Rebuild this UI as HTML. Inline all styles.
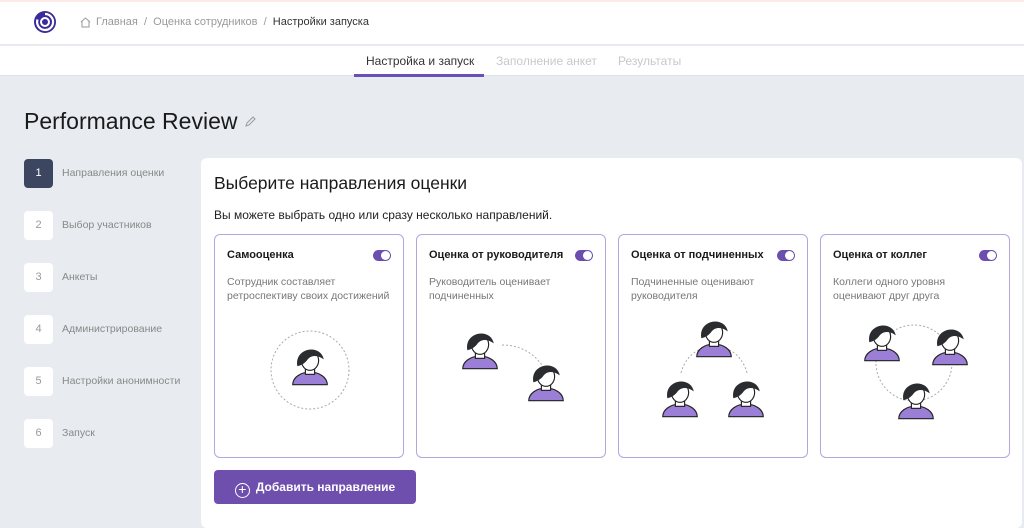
<!DOCTYPE html>
<html><head><meta charset="utf-8"><style>
*{box-sizing:border-box;margin:0;padding:0}
body{width:1024px;height:514px;overflow:hidden;background:#e8ecf0;font-family:"Liberation Sans",sans-serif;position:relative}
.abs{position:absolute}
.hdr{left:0;top:0;width:1024px;height:45px;background:#fff;border-top:2px solid #fde9e6;border-bottom:1px solid #e6e8eb}
.tabs{left:0;top:46px;width:1024px;height:30px;background:#fff;border-bottom:1px solid #dde1e6}
.step{left:24px;width:29px;height:29px;border-radius:4px;background:#fff;color:#999;font-size:11px;text-align:center;line-height:29px}
.sl{left:62px;font-size:10.5px;color:#888}
.main{left:201px;top:158px;width:821px;height:370px;background:#fff;border-radius:6px}
.card{top:234px;width:190px;height:224px;border:1px solid #b4a6dc;border-radius:6px;background:#fff}
.card h3{position:absolute;left:12px;top:14px;font-size:11px;font-weight:bold;color:#1a1a1a}
.card p{position:absolute;left:12px;top:40px;font-size:10.5px;line-height:14px;color:#777}
.tg{position:absolute;right:12px;top:15px;width:18px;height:11px;border-radius:6px;background:#6a4fae}
.tg::after{content:"";position:absolute;right:1px;top:1px;width:9px;height:9px;border-radius:50%;background:#fff}
.card svg{position:absolute;left:0;top:60px}
</style></head><body>
<div class="abs hdr"></div>
<svg class="abs" style="left:33px;top:10px" width="24" height="24" viewBox="0 0 24 24"><circle cx="12" cy="12" r="11" fill="#3b2a9a"/><path d="M12 4a8 8 0 1 1-7.5 5.5" stroke="#fff" stroke-width="2.2" fill="none"/><circle cx="12" cy="12" r="4" fill="none" stroke="#fff" stroke-width="2"/></svg>
<svg class="abs" style="left:80px;top:17px" width="11" height="11" viewBox="0 0 11 11"><path d="M1 5L5.5 1 10 5M2 4.5V10h7V4.5" stroke="#999" fill="none"/></svg>
<div class="abs" style="left:96px;top:16px;font-size:11px;color:#999">Главная &nbsp;/ &nbsp;Оценка сотрудников &nbsp;/ &nbsp;<span style="color:#333">Настройки запуска</span></div>
<div class="abs tabs"></div>
<div class="abs" style="left:366px;top:54px;font-size:12px;color:#333">Настройка и запуск</div>
<div class="abs" style="left:354px;top:74px;width:130px;height:3px;background:#6a4fb8"></div>
<div class="abs" style="left:496px;top:54px;font-size:12px;color:#c8c8c8">Заполнение анкет</div>
<div class="abs" style="left:618px;top:54px;font-size:12px;color:#c8c8c8">Результаты</div>
<div class="abs" style="left:24px;top:108px;font-size:23px;color:#1a1a1a">Performance Review</div>
<svg class="abs" style="left:244px;top:115px" width="13" height="13" viewBox="0 0 13 13"><path d="M2 11l1-3 6-6 2 2-6 6z" stroke="#999" fill="none"/></svg>
<div class="abs step" style="top:159px;background:#3d4660;color:#fff">1</div><div class="abs sl" style="top:167px">Направления оценки</div>
<div class="abs step" style="top:211px">2</div><div class="abs sl" style="top:219px">Выбор участников</div>
<div class="abs step" style="top:263px">3</div><div class="abs sl" style="top:271px">Анкеты</div>
<div class="abs step" style="top:315px">4</div><div class="abs sl" style="top:323px">Администрирование</div>
<div class="abs step" style="top:367px">5</div><div class="abs sl" style="top:375px">Настройки анонимности</div>
<div class="abs step" style="top:419px">6</div><div class="abs sl" style="top:427px">Запуск</div>
<div class="abs main"></div>
<div class="abs" style="left:214px;top:173px;font-size:17.5px;color:#1a1a1a">Выберите направления оценки</div>
<div class="abs" style="left:214px;top:208px;font-size:12px;color:#222">Вы можете выбрать одно или сразу несколько направлений.</div>
<svg width="0" height="0" style="position:absolute"><defs>
<symbol id="av" viewBox="0 0 40 40"><path d="M5 38a15 11 0 0 1 30 0z" fill="#9b7fd6" stroke="#222"/><rect x="16" y="22" width="8" height="7" fill="#fff" stroke="#222"/><ellipse cx="20" cy="17" rx="7.5" ry="8.5" fill="#fff" stroke="#222"/><path d="M9 22c-3-16 20-20 23-6-5-4-11-4-14 0-2 3-5 5-9 6z" fill="#2a2c30"/></symbol>
</defs></svg>
<div class="abs card" style="left:214px"><h3>Самооценка</h3><div class="tg"></div><p>Сотрудник составляет<br>ретроспективу своих достижений</p>
<svg width="190" height="150"><circle cx="95" cy="75" r="39" fill="none" stroke="#aaa" stroke-dasharray="2 2"/><use href="#av" x="72" y="46" width="46" height="46"/></svg></div>
<div class="abs card" style="left:416px"><h3>Оценка от руководителя</h3><div class="tg"></div><p>Руководитель оценивает<br>подчиненных</p>
<svg width="190" height="150"><path d="M85 50q25 0 40 20" stroke="#aaa" fill="none" stroke-dasharray="2 2"/><use href="#av" x="40" y="30" width="46" height="46"/><use href="#av" x="106" y="62" width="46" height="46"/></svg></div>
<div class="abs card" style="left:618px"><h3>Оценка от подчиненных</h3><div class="tg"></div><p>Подчиненные оценивают<br>руководителя</p>
<svg width="190" height="150"><path d="M62 78q5-18 20-24M128 78q-5-18-20-24" stroke="#aaa" fill="none" stroke-dasharray="2 2"/><use href="#av" x="72" y="18" width="46" height="46"/><use href="#av" x="38" y="78" width="46" height="46"/><use href="#av" x="104" y="78" width="46" height="46"/></svg></div>
<div class="abs card" style="left:820px"><h3>Оценка от коллег</h3><div class="tg"></div><p>Коллеги одного уровня<br>оценивают друг друга</p>
<svg width="190" height="150"><circle cx="93" cy="68" r="38" fill="none" stroke="#aaa" stroke-dasharray="2 2"/><use href="#av" x="38" y="22" width="46" height="46"/><use href="#av" x="106" y="26" width="46" height="46"/><use href="#av" x="72" y="80" width="46" height="46"/></svg></div>
<div class="abs" style="left:214px;top:470px;width:202px;height:34px;border-radius:4px;background:#6f4fae;color:#fff;font-size:12px;font-weight:bold;line-height:34px;text-align:center"><span style="display:inline-block;width:15px;height:15px;border:1.5px solid #fff;border-radius:50%;line-height:11px;font-size:14px;vertical-align:-3px;margin-right:6px;font-weight:normal">+</span>Добавить направление</div>
</body></html>
